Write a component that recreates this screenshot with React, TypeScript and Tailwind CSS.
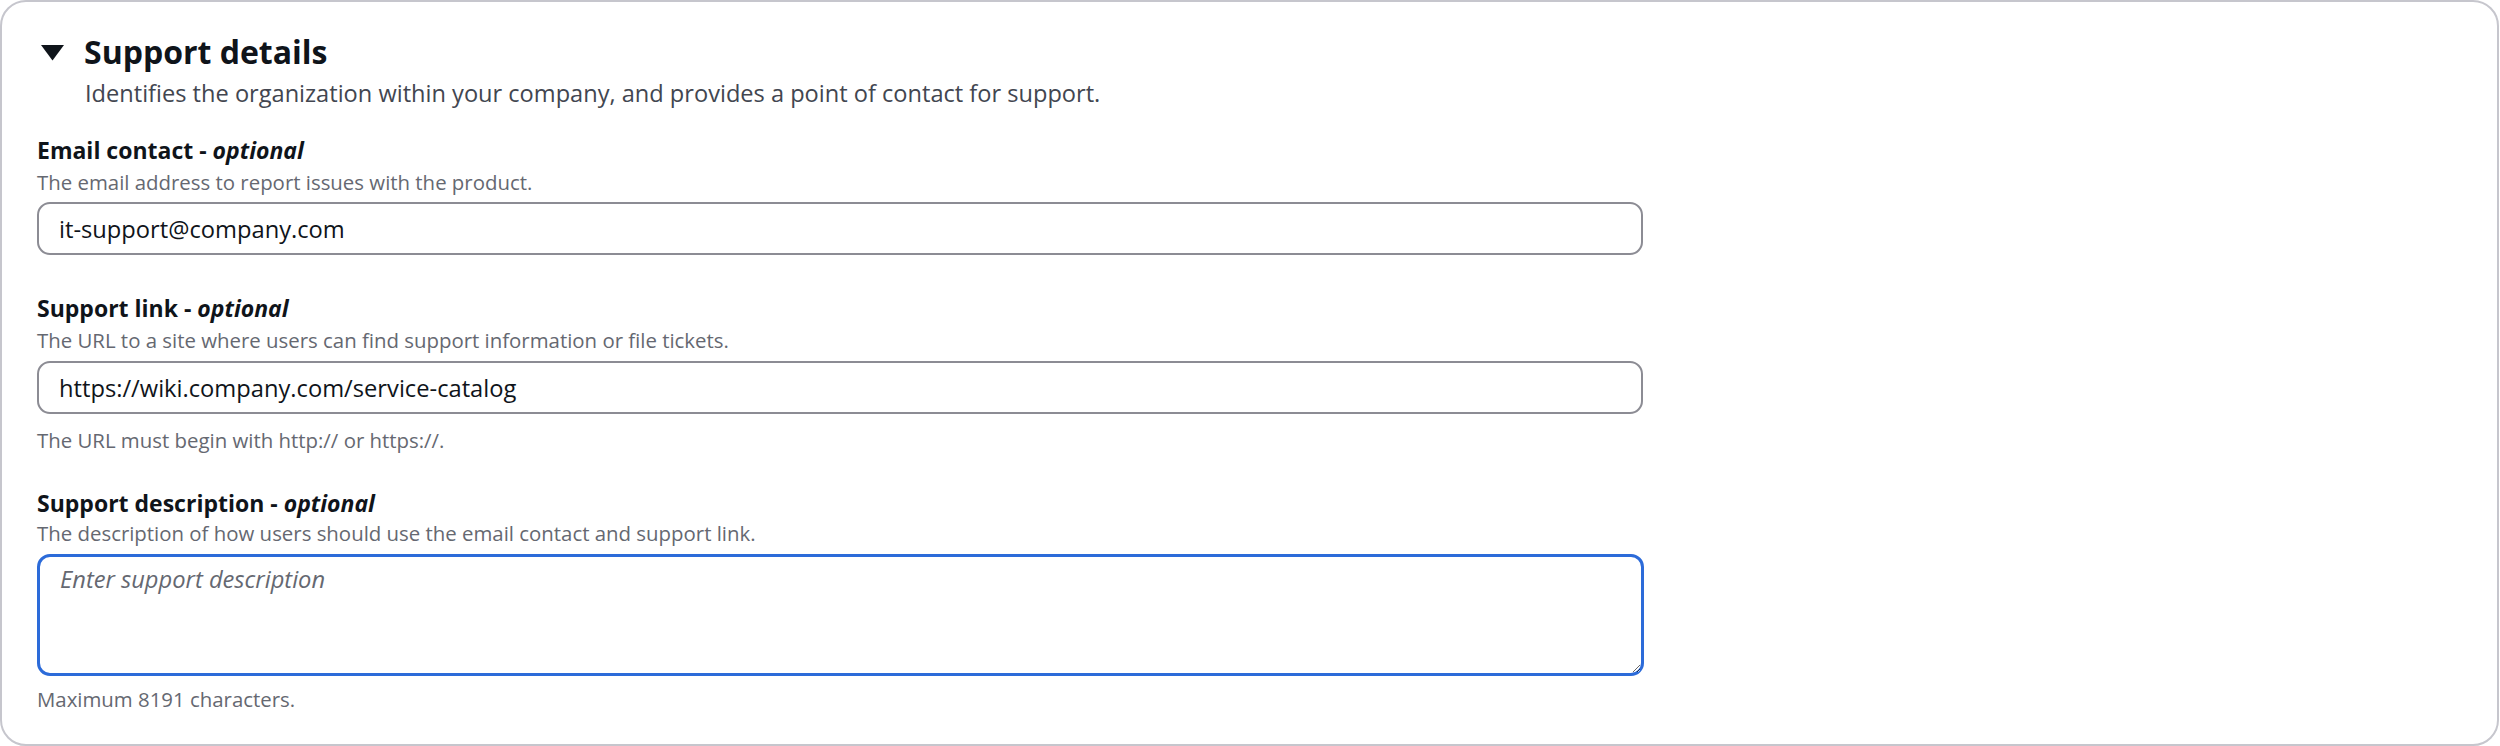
import React from 'react';

const FONT = { fontFamily: '"Open Sans", "Noto Sans", Arial, sans-serif' };

function Label({ text }: { text: string }) {
  return (
    <div className="text-[23px] leading-[32px] font-bold text-[#0f141a]">
      {text} - <i className="font-bold">optional</i>
    </div>
  );
}

function Hint({ text, className = '' }: { text: string; className?: string }) {
  return <div className={`text-[20.4px] leading-[28px] text-[#656871] ${className}`}>{text}</div>;
}

function TextInput({ value }: { value: string }) {
  return (
    <input
      readOnly
      value={value}
      className="block w-[1606px] h-[53px] rounded-[13px] border-2 border-[#8c8c94] bg-white pl-[20px] pr-4 text-[23.7px] text-[#0f141a] outline-none"
    />
  );
}

export default function App() {
  return (
    <div style={FONT} className="w-full bg-white">
      <div className="w-[2499px] h-[746px] rounded-[26px] border-2 border-[#c6c6cd] bg-white pt-[28px] pl-[35px]">
        <div className="flex items-center">
          <svg width="24" height="16" viewBox="0 0 24 16" className="ml-[4px] mr-[19px] mt-[1px]">
            <path d="M0 0 H23 L11.5 15.5 Z" fill="#0f141a" />
          </svg>
          <h2 className="text-[32px] leading-[44px] font-bold text-[#0f141a]">Support details</h2>
        </div>
        <p className="ml-[48px] mt-[3px] text-[23.6px] leading-[32px] text-[#424650]">
          Identifies the organization within your company, and provides a point of contact for support.
        </p>

        <div className="mt-[25px]">
          <Label text="Email contact" />
          <Hint text="The email address to report issues with the product." className="mt-[2px]" />
          <div className="mt-[6px]">
            <TextInput value="it-support@company.com" />
          </div>
        </div>

        <div className="mt-[37px]">
          <Label text="Support link" />
          <Hint text="The URL to a site where users can find support information or file tickets." className="mt-[2px]" />
          <div className="mt-[7px]">
            <TextInput value="https://wiki.company.com/service-catalog" />
          </div>
          <Hint text="The URL must begin with http:// or https://." className="mt-[12px]" />
        </div>

        <div className="mt-[33px]">
          <Label text="Support description" />
          <Hint text="The description of how users should use the email contact and support link." className="mt-[0px]" />
          <div className="mt-[7px]">
            <textarea
              placeholder="Enter support description"
              className="block w-[1607px] h-[122px] resize-y rounded-[13px] border-[3px] border-[#2c6bd9] bg-white px-[20px] pt-[6px] text-[23.7px] leading-[32px] text-[#0f141a] outline-none placeholder:italic placeholder:text-[#656871]"
            />
          </div>
          <Hint text="Maximum 8191 characters." className="mt-[9px]" />
        </div>
      </div>
    </div>
  );
}
